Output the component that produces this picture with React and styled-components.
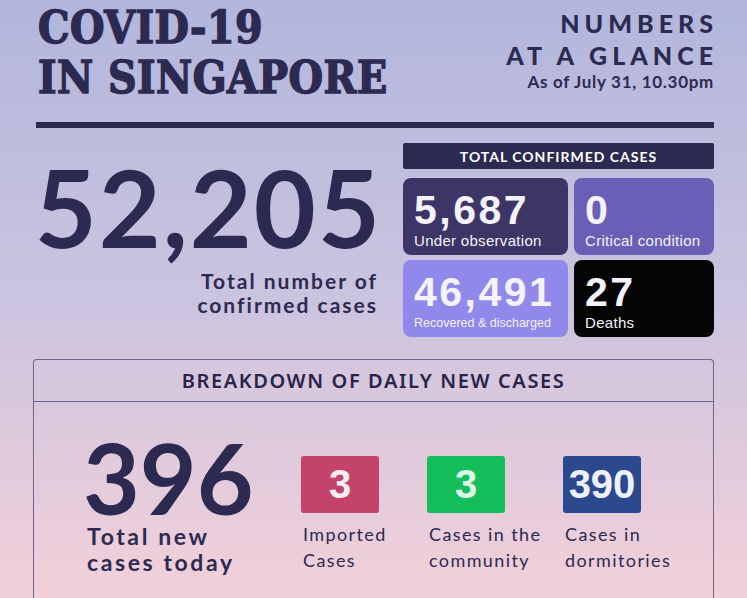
import React from 'react';
import styled, {createGlobalStyle} from 'styled-components';

const ink = '#2d2a52';

const GlobalStyle = createGlobalStyle`
    body {
        margin: 0;
        font-family: Lato, "Noto Sans", sans-serif;
    }
`;

const Page = styled.div`
    width: 747px;
    height: 598px;
    overflow: hidden;
    box-sizing: border-box;
    padding: 2px 33px 0 33px;
    background: linear-gradient(180deg, #b2b6dc 0%, #cbc4df 50%, #f2d0d9 100%);
    color: ${ink};
`;

const Header = styled.header`
    display: flex;
    justify-content: space-between;
    align-items: flex-start;
    padding-left: 5px;
`;

const Title = styled.h1`
    margin: 0;
    font-family: "DejaVu Serif Condensed", "DejaVu Serif", serif;
    font-weight: 700;
    font-size: 44px;
    line-height: 50px;
    letter-spacing: 0.5px;
    padding-top: 1px;
    -webkit-text-stroke: 1.4px ${ink};
`;

const Glance = styled.div`
    text-align: right;
    padding-top: 5px;
`;

const GlanceTitle = styled.div`
    font-size: 25px;
    font-weight: 900;
    line-height: 32px;
    letter-spacing: 5px;
    margin-right: -4px;
`;

const AsOf = styled.div`
    margin-top: 1px;
    font-size: 17px;
    font-weight: 700;
    line-height: 20px;
    letter-spacing: 0.7px;
`;

const Divider = styled.hr`
    border: none;
    height: 6px;
    margin: 19px 0 0 3px;
    background: ${ink};
`;

const Stats = styled.section`
    display: grid;
    grid-template-columns: 1fr 311px;
    column-gap: 25px;
    margin-top: 15px;
`;

const TotalBlock = styled.div`
    text-align: right;
`;

const BigNumber = styled.div`
    margin-top: 14px;
    margin-right: -4px;
    font-size: 107px;
    font-weight: 700;
    line-height: 100px;
    letter-spacing: 2px;
`;

const TotalLabel = styled.div`
    margin-top: 12px;
    font-size: 21px;
    font-weight: 700;
    line-height: 24px;
    letter-spacing: 2px;
`;

const PanelHead = styled.div`
    height: 26px;
    display: flex;
    align-items: center;
    justify-content: center;
    background: ${ink};
    color: #fff;
    font-size: 14px;
    font-weight: 700;
    letter-spacing: 1px;
    border-radius: 2px;
`;

const CardGrid = styled.div`
    display: grid;
    grid-template-columns: 165px 140px;
    grid-auto-rows: 77px;
    gap: 5px 6px;
    margin-top: 9px;
`;

const Card = styled.div`
    display: flex;
    flex-direction: column;
    box-sizing: border-box;
    padding: 12px 6px 5px 11px;
    border-radius: 8px;
    background: ${p => p.$bg};
    color: #f4f2fb;
    font-family: "Liberation Sans", Arial, sans-serif;
`;

const CardNumber = styled.div`
    font-size: 41px;
    font-weight: 700;
    line-height: 41px;
    letter-spacing: 2.5px;
`;

const CardLabel = styled.div`
    margin-top: 2px;
    font-size: ${p => (p.$small ? '12.5px' : '15px')};
    line-height: 16px;
    letter-spacing: ${p => (p.$small ? '0' : '0.3px')};
    white-space: nowrap;
`;

const Breakdown = styled.section`
    margin-top: 22px;
    height: 260px;
    border: 1.5px solid #6f668f;
    border-bottom: none;
    border-radius: 4px 4px 0 0;
`;

const BoxHead = styled.div`
    height: 41px;
    display: flex;
    align-items: center;
    justify-content: center;
    border-bottom: 1.5px solid #6f668f;
    font-family: "Noto Sans", sans-serif;
    font-size: 20px;
    font-weight: 600;
    letter-spacing: 1.6px;
    color: #28244a;
`;

const BoxBody = styled.div`
    display: flex;
    align-items: flex-start;
    padding: 29px 0 0 49px;
`;

const NewTotal = styled.div`
    width: 218px;
    flex-shrink: 0;
`;

const NewNumber = styled.div`
    font-size: 98px;
    font-weight: 700;
    line-height: 92px;
`;

const NewLabel = styled.div`
    padding-left: 4px;
    font-size: 23px;
    font-weight: 700;
    line-height: 26px;
    letter-spacing: 2.6px;
`;

const Items = styled.div`
    display: grid;
    grid-template-columns: 126px 136px auto;
    margin-top: 25px;
`;

const Tile = styled.div`
    width: 78px;
    height: 57px;
    display: flex;
    align-items: center;
    justify-content: center;
    border-radius: 3px;
    background: ${p => p.$bg};
    color: ${p => p.$fg};
    font-family: "Liberation Sans", Arial, sans-serif;
    font-size: 40px;
    font-weight: 700;
`;

const ItemLabel = styled.div`
    margin-top: 8px;
    padding-left: 2px;
    font-size: 18px;
    line-height: 26px;
    letter-spacing: 1.4px;
    white-space: nowrap;
`;

const cards = [
    {value: '5,687', label: 'Under observation', bg: '#3d3566'},
    {value: '0', label: 'Critical condition', bg: '#6a5fb6'},
    {value: '46,491', label: 'Recovered & discharged', bg: '#9088ea', small: true},
    {value: '27', label: 'Deaths', bg: '#050505'},
];

const daily = [
    {value: '3', lines: ['Imported', 'Cases'], bg: '#c4436a', fg: '#fdeef3'},
    {value: '3', lines: ['Cases in the', 'community'], bg: '#14bf5b', fg: '#defbe9'},
    {value: '390', lines: ['Cases in', 'dormitories'], bg: '#2b4a8e', fg: '#eef2ff'},
];

export default function App() {
    return (
        <Page>
            <GlobalStyle />
            <Header>
                <Title>COVID-19<br />IN SINGAPORE</Title>
                <Glance>
                    <GlanceTitle>NUMBERS<br />AT A GLANCE</GlanceTitle>
                    <AsOf>As of July 31, 10.30pm</AsOf>
                </Glance>
            </Header>
            <Divider />

            <Stats>
                <TotalBlock>
                    <BigNumber>52,205</BigNumber>
                    <TotalLabel>Total number of<br />confirmed cases</TotalLabel>
                </TotalBlock>
                <div>
                    <PanelHead>TOTAL CONFIRMED CASES</PanelHead>
                    <CardGrid>
                        {cards.map(card => (
                            <Card key={card.label} $bg={card.bg}>
                                <CardNumber>{card.value}</CardNumber>
                                <CardLabel $small={card.small}>{card.label}</CardLabel>
                            </Card>
                        ))}
                    </CardGrid>
                </div>
            </Stats>

            <Breakdown>
                <BoxHead>BREAKDOWN OF DAILY NEW CASES</BoxHead>
                <BoxBody>
                    <NewTotal>
                        <NewNumber>396</NewNumber>
                        <NewLabel>Total new<br />cases today</NewLabel>
                    </NewTotal>
                    <Items>
                        {daily.map(item => (
                            <div key={item.lines[0]}>
                                <Tile $bg={item.bg} $fg={item.fg}>{item.value}</Tile>
                                <ItemLabel>{item.lines[0]}<br />{item.lines[1]}</ItemLabel>
                            </div>
                        ))}
                    </Items>
                </BoxBody>
            </Breakdown>
        </Page>
    );
}
